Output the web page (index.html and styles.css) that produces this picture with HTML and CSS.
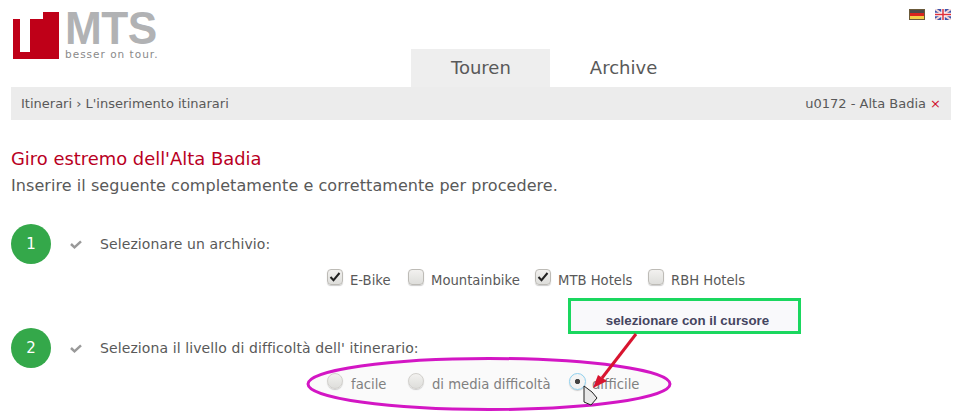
FILE: index.html
```html
<!DOCTYPE html>
<html lang="it">
<head>
<meta charset="utf-8">
<title>MTS</title>
<link rel="stylesheet" href="styles.css">
</head>
<body>
<div class="page">
  <header class="header">
    <div class="logo">
      <svg class="logo-mark" width="46" height="47" viewBox="0 0 46 47"><path d="M0 7H7V40H17V7H30V0H46V47H0Z" fill="#bf0018"/></svg>
      <div class="logo-text">
        <div class="logo-name">MTS</div>
        <div class="logo-claim">besser on tour.</div>
      </div>
    </div>
    <nav class="tabs">
      <a class="tab tab-active">Touren</a>
      <a class="tab">Archive</a>
    </nav>
    <div class="flags">
      <svg width="16" height="11" viewBox="0 0 16 11"><rect width="16" height="11" fill="#6b5a3a"/><rect x="1" y="1" width="14" height="3" fill="#4a4a4a"/><rect x="1" y="4" width="14" height="3" fill="#d8241f"/><rect x="1" y="7" width="14" height="3" fill="#f3cf4a"/></svg>
      <svg width="16" height="11" viewBox="0 0 16 11"><rect width="16" height="11" fill="#3f52a8"/><path d="M0 0L16 11M16 0L0 11" stroke="#f4d6d6" stroke-width="2"/><path d="M8 0V11M0 5.500H16" stroke="#fff" stroke-width="3.500"/><path d="M8 0V11M0 5.500H16" stroke="#e0303a" stroke-width="1.500"/></svg>
    </div>
  </header>
  <div class="crumbs">
    <span>Itinerari › L'inserimento itinarari</span>
    <span>u0172 - Alta Badia <span class="close">×</span></span>
  </div>
  <h1 class="title">Giro estremo dell'Alta Badia</h1>
  <p class="lead">Inserire il seguente completamente e correttamente per procedere.</p>

  <section class="step step-one">
    <div class="step-head">
      <div class="num">1</div>
      <svg class="tick" width="12" height="9" viewBox="0 0 12 9"><path d="M1 4L4.500 7.300L11 1.300" fill="none" stroke="#999" stroke-width="2.500"/></svg>
      <div class="step-label">Selezionare un archivio:</div>
    </div>
    <div class="options">
      <label class="opt opt-a"><span class="box"><svg width="12" height="10" viewBox="0 0 12 10"><path d="M1.500 5L4.500 8.200L10.500 1" fill="none" stroke="#222" stroke-width="2"/></svg></span>E-Bike</label>
      <label class="opt opt-b"><span class="box"></span>Mountainbike</label>
      <label class="opt opt-c"><span class="box"><svg width="12" height="10" viewBox="0 0 12 10"><path d="M1.500 5L4.500 8.200L10.500 1" fill="none" stroke="#222" stroke-width="2"/></svg></span>MTB Hotels</label>
      <label class="opt"><span class="box"></span>RBH Hotels</label>
    </div>
  </section>

  <section class="step step-two">
    <div class="step-head">
      <div class="num">2</div>
      <svg class="tick" width="12" height="9" viewBox="0 0 12 9"><path d="M1 4L4.500 7.300L11 1.300" fill="none" stroke="#999" stroke-width="2.500"/></svg>
      <div class="step-label">Seleziona il livello di difficoltà dell' itinerario:</div>
    </div>
    <div class="options radios">
      <label class="opt opt-r1"><span class="radio"></span>facile</label>
      <label class="opt opt-r2"><span class="radio"></span>di media difficoltà</label>
      <label class="opt"><span class="radio radio-on"></span>difficile</label>
    </div>
  </section>
</div>

<svg class="ring" width="370" height="60" viewBox="0 0 370 60"><ellipse cx="185" cy="30" rx="181" ry="25.500" fill="#fafafa" stroke="#d316c4" stroke-width="3"/></svg>
<div class="callout">selezionare con il cursore</div>
<svg class="pointer" width="80" height="90" viewBox="0 0 80 90">
  <path d="M66 3L32 47" stroke="#d8142f" stroke-width="3" fill="none"/>
  <path d="M23 57L28 44L37 50Z" fill="#d8142f"/>
  <path d="M14 55V71L21 74L27 67L22 61Z" fill="#e8e8e8" stroke="#222" stroke-width="1"/>
</svg>
</body>
</html>
```
FILE: styles.css
```css
html, body {
  margin: 0;
  height: 415px;
  overflow: hidden;
  background: #fff;
}
body {
  position: relative;
  font-family: "DejaVu Sans", sans-serif;
  color: #595959;
}
.page {
  box-sizing: border-box;
  width: 951px;
  padding-left: 11px;
  position: relative;
  z-index: 1;
}
.header {
  display: flex;
  align-items: flex-start;
  height: 87px;
}
.logo {
  display: flex;
  width: 400px;
  flex: none;
  margin-top: 12px;
  padding-left: 2px;
  box-sizing: border-box;
}
.logo-text {
  margin-left: 6px;
}
.logo-name {
  font: bold 47px/32px "Liberation Sans", sans-serif;
  letter-spacing: -0.5px;
  color: #b1b2b4;
  height: 36px;
  transform: scaleX(0.94);
  transform-origin: left;
}
.logo-claim {
  font-size: 10.500px;
  line-height: 13px;
  letter-spacing: 1px;
  color: #8a8a8a;
}
.tabs {
  display: flex;
  align-self: flex-end;
}
.tab {
  box-sizing: border-box;
  height: 38px;
  padding: 0 39px 0 40px;
  font-size: 18px;
  line-height: 38px;
}
.tab-active {
  background: #eee;
}
.flags {
  display: flex;
  gap: 10px;
  margin-left: auto;
  margin-top: 9px;
}
.crumbs {
  display: flex;
  justify-content: space-between;
  height: 33px;
  padding: 0 10px;
  background: #ececec;
  font-size: 13px;
  line-height: 33px;
}
.close {
  color: #d0142c;
}
.title {
  margin: 28px 0 0;
  font-size: 17.900px;
  line-height: 22px;
  font-weight: normal;
  color: #b9001f;
}
.lead {
  margin: 6px 0 0;
  font-size: 16px;
  line-height: 20px;
  letter-spacing: 0.06px;
}
.step-one {
  margin-top: 28px;
}
.step-two {
  margin-top: 35px;
}
.step-head {
  display: flex;
  align-items: center;
  height: 40px;
  font-size: 14px;
}
.num {
  width: 40px;
  height: 40px;
  border-radius: 50%;
  background: #34a84a;
  color: #fff;
  text-align: center;
  line-height: 40px;
  font-size: 15px;
}
.tick {
  margin-left: 19px;
}
.step-label {
  margin-left: 18px;
  letter-spacing: 0.1px;
}
.options {
  display: flex;
  margin-left: 315px;
  margin-top: 5px;
  font-size: 13.200px;
}
.radios {
  color: #808080;
}
.opt {
  display: flex;
  align-items: flex-start;
  line-height: 16px;
  padding-top: 4px;
  height: 24px;
  box-sizing: border-box;
}
.opt-a { width: 81px; }
.opt-b { width: 127px; }
.opt-c { width: 113px; }
.opt-r1 { width: 81px; }
.opt-r2 { width: 161px; }
.box,
.radio {
  display: flex;
  align-items: center;
  justify-content: center;
  box-sizing: border-box;
  width: 16px;
  height: 16px;
  margin: -4px 7px 0 1px;
  border: 1px solid #bdbbb6;
  background: linear-gradient(#f2f1ef, #dededb);
  box-shadow: 0 1px 1px #ccc;
}
.box {
  border-radius: 4px;
}
.radio {
  border-radius: 50%;
  border-color: #d2d0cc;
  margin-right: 8px;
}
.radio-on {
  background: radial-gradient(circle, #444 0 2.200px, #f4f4f4 3px);
  border: 1.500px solid #8fd0ee;
  width: 17px;
  height: 17px;
  margin: -4px 6px 0 1px;
}
.ring {
  position: absolute;
  left: 304px;
  top: 354px;
  z-index: 0;
}
.callout {
  position: absolute;
  z-index: 2;
  left: 568px;
  top: 298px;
  box-sizing: border-box;
  width: 233px;
  height: 36px;
  padding: 13px 0 0 6px;
  border: 3px solid #1ad75f;
  background: #f9f9fb;
  font: bold 13.300px/14px "Liberation Sans", sans-serif;
  color: #45455f;
  text-align: center;
}
.pointer {
  position: absolute;
  z-index: 3;
  left: 570px;
  top: 331px;
}
```
